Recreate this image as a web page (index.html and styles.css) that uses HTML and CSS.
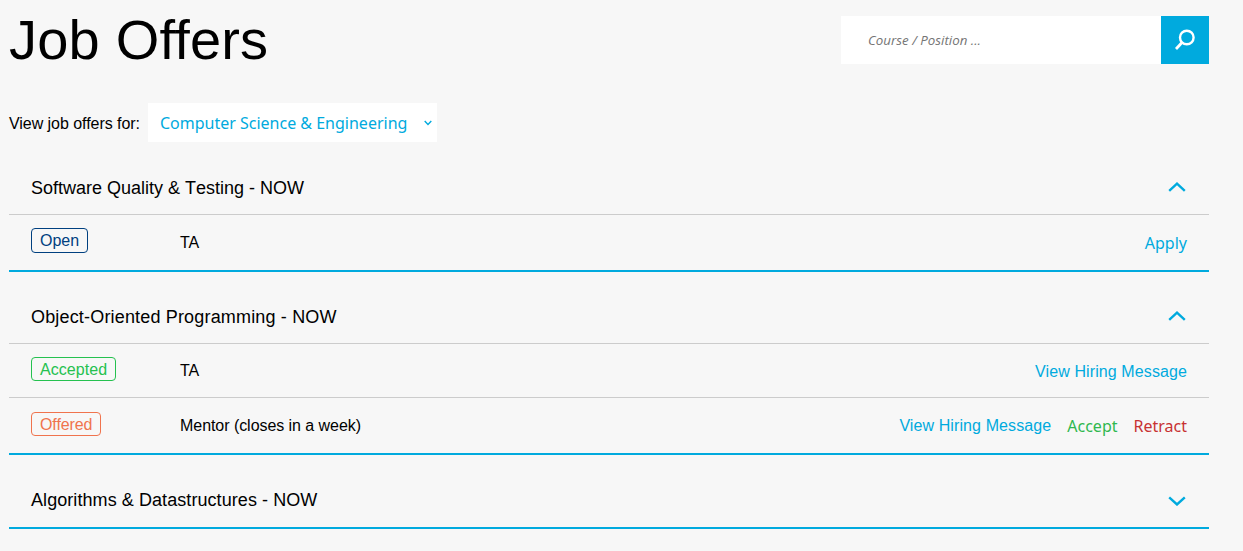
FILE: index.html
```html
<!DOCTYPE html>
<html lang="en">
<head>
<meta charset="utf-8">
<title>Job Offers</title>
<link rel="stylesheet" href="styles.css">
</head>
<body>
<header class="top">
  <h1 class="title">Job Offers</h1>
  <form class="search">
    <input class="search-input" type="text" placeholder="Course / Position ...">
    <button class="search-btn" type="button" aria-label="Search">
      <svg width="22" height="22" viewBox="0 0 22 22" fill="none" stroke="#fff"><circle cx="12.8" cy="8.5" r="6.8" stroke-width="2.4"/><path d="M8 13.5 2 20" stroke-width="2.8"/></svg>
    </button>
  </form>
</header>
<div class="filter">
  <span class="filter-label">View job offers for:</span>
  <div class="select">
    <span>Computer Science &amp; Engineering</span>
    <svg class="select-arrow" width="8" height="6" viewBox="0 0 8 6" fill="none" stroke="#00aade" stroke-width="1.4"><path d="M.7 1 4 4.4 7.3 1"/></svg>
  </div>
</div>
<section class="course">
  <div class="course-head">
    <h2 class="course-name">Software Quality &amp; Testing - NOW</h2>
    <svg class="chev" width="18" height="11" viewBox="0 0 18 11" fill="none" stroke="#00aade" stroke-width="2.4"><path d="M1.2 8.8 9 1.7l7.8 7.1"/></svg>
  </div>
  <div class="row">
    <span class="cell-status"><span class="badge badge-open">Open</span></span>
    <span class="cell-role">TA</span>
    <span class="actions"><a class="act act-apply">Apply</a></span>
  </div>
</section>
<section class="course">
  <div class="course-head">
    <h2 class="course-name course-name-wide">Object-Oriented Programming - NOW</h2>
    <svg class="chev" width="18" height="11" viewBox="0 0 18 11" fill="none" stroke="#00aade" stroke-width="2.4"><path d="M1.2 8.8 9 1.7l7.8 7.1"/></svg>
  </div>
  <div class="row">
    <span class="cell-status"><span class="badge badge-accepted">Accepted</span></span>
    <span class="cell-role">TA</span>
    <span class="actions"><a class="act act-view act-view-solo">View Hiring Message</a></span>
  </div>
  <div class="row">
    <span class="cell-status"><span class="badge badge-offered">Offered</span></span>
    <span class="cell-role cell-role-long">Mentor (closes in a week)</span>
    <span class="actions"><a class="act act-view">View Hiring Message</a><a class="act act-accept">Accept</a><a class="act act-retract">Retract</a></span>
  </div>
</section>
<section class="course">
  <div class="course-head course-head-closed">
    <h2 class="course-name course-name-mid">Algorithms &amp; Datastructures - NOW</h2>
    <svg class="chev" width="18" height="11" viewBox="0 0 18 11" fill="none" stroke="#00aade" stroke-width="2.4"><path d="M1.2 2.4 9 9.5l7.8-7.1"/></svg>
  </div>
</section>
</body>
</html>
```

FILE: styles.css
```css
* { box-sizing: border-box; }
html, body { margin: 0; }
body {
  width: 1209px;
  padding: 0 0 0 9px;
  background: #f7f7f7;
  color: #000;
  font-family: "Liberation Sans", Arial, sans-serif;
  font-size: 16px;
}
.top {
  display: flex;
  justify-content: space-between;
  align-items: flex-start;
  padding-top: 16px;
  height: 103px;
}
.title {
  margin: -8px 0 0;
  font-size: 56px;
  font-weight: 400;
  line-height: 64px;
  letter-spacing: .2px;
}
.search { display: flex; }
.search-input {
  width: 320px;
  height: 48px;
  border: 0;
  padding: 0 27px;
  background: #fff;
  font-family: "Open Sans", sans-serif;
  font-style: italic;
  font-size: 13.33px;
  outline: none;
}
.search-input::placeholder { color: #757575; opacity: 1; }
.search-btn {
  width: 48px;
  height: 48px;
  border: 0;
  padding: 0;
  background: #00aade;
  display: flex;
  align-items: center;
  justify-content: center;
}
.filter {
  display: flex;
  align-items: center;
  gap: 8px;
  height: 39px;
}
.filter-label { padding-top: 2px; letter-spacing: -.05px; }
.select {
  width: 289px;
  height: 39px;
  padding: 0 5px 0 12px;
  background: #fff;
  color: #00aade;
  font-family: "Noto Sans", sans-serif;
  font-size: 16px;
  display: flex;
  align-items: center;
  justify-content: space-between;
}
.course { border-bottom: 2px solid #00aade; margin-bottom: 18px; }
.course:nth-of-type(1) { margin-top: 19px; }
.course-head {
  height: 54px;
  padding: 0 22px;
  border-bottom: 1px solid #ccc;
  display: flex;
  align-items: center;
  justify-content: space-between;
}
.course-head-closed { border-bottom: 0; }
.course-name { margin: 1px 0 0; font-size: 18px; font-weight: 400; font-kerning: none; }
.course-name-wide { letter-spacing: .17px; }
.course-name-mid { letter-spacing: .07px; }
.chev { margin-right: 1px; }
.row {
  display: flex;
  align-items: center;
  height: 54px;
  padding: 0 22px;
  border-bottom: 1px solid #ccc;
}
.row:last-child { border-bottom: 0; height: 55px; }
.cell-status { display: flex; width: 149px; margin-top: -3px; }
.cell-role { flex: 1; }
.cell-role-long { letter-spacing: -.05px; }
.badge {
  height: 24px;
  padding: 0 8px;
  border: 1px solid;
  border-radius: 4px;
  line-height: 24px;
}
.badge-open { height: 25px; margin-top: -1px; line-height: 24px; color: #004080; border-color: #004080; }
.badge-accepted { letter-spacing: .05px; color: #25c14f; border-color: #25c14f; }
.badge-offered { letter-spacing: -.1px; color: #f0734d; border-color: #f0734d; }
.actions { display: flex; gap: 16px; align-items: center; }
.act-apply, .act-accept, .act-retract { font-family: "Noto Sans", sans-serif; }
.act-apply, .act-view { color: #00aade; }
.act-view { letter-spacing: .1px; }
.act-view-solo { padding-top: 2px; }
.act-accept { color: #2fb84f; }
.act-retract { color: #c83232; }
```
